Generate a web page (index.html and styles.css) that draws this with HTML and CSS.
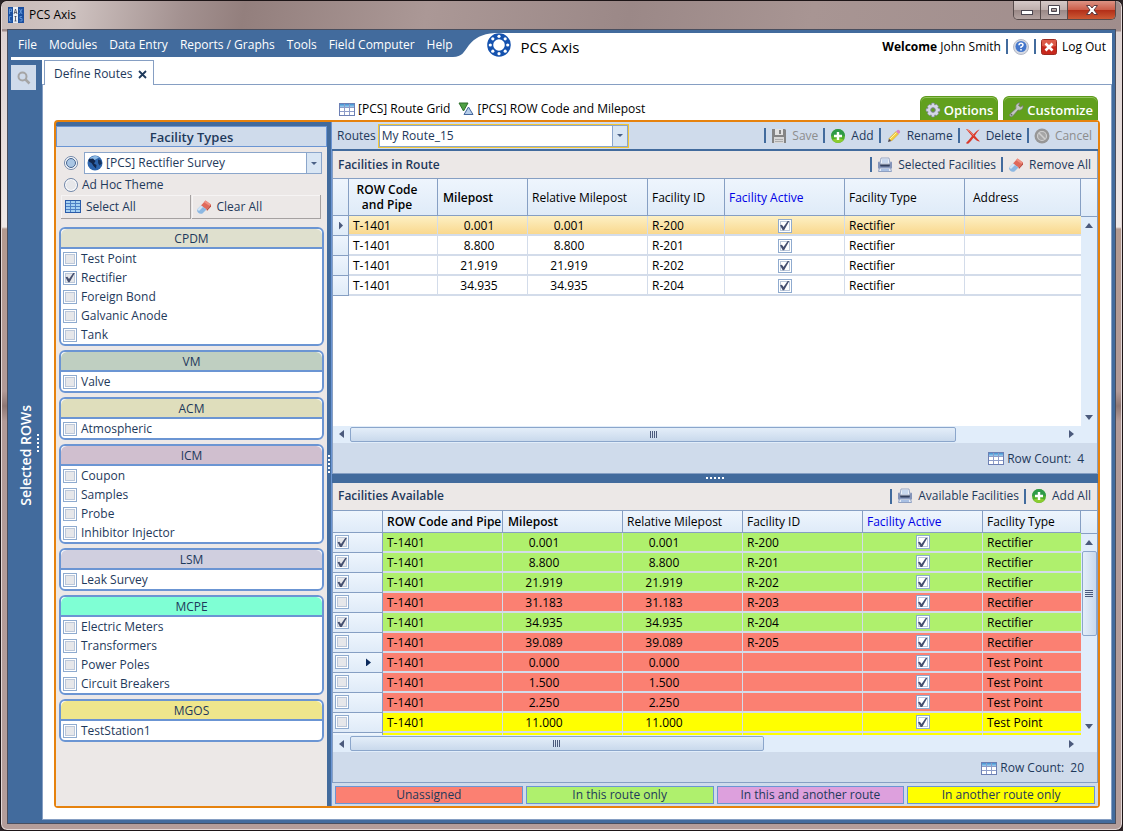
FILE: index.html
```html
<!DOCTYPE html>
<html lang="en">
<head>
    <meta charset="UTF-8">
    <meta name="viewport" content="width=device-width, initial-scale=1.0">
    <title>PCS Axis</title>
    <link rel="stylesheet" href="styles.css">
</head>
<body>
    <!-- shared icons -->
    <svg class="sprite" aria-hidden="true">
        <linearGradient id="gridHead" x1="0" y1="0" x2="0" y2="1">
            <stop offset="0" stop-color="#3f8fd0"/><stop offset="1" stop-color="#9fd0f0"/>
        </linearGradient>
        <symbol id="i-grid" viewBox="0 0 16 13">
            <rect x="0.5" y="0.5" width="15" height="12" fill="#fff" stroke="#6d80b4"/>
            <rect x="1" y="1" width="14" height="3" fill="url(#gridHead)"/>
            <path d="M1 4.5H15M1 8.5H15M5.5 1V12M10.5 1V12" stroke="#8d9cc8" fill="none"/>
        </symbol>
        <symbol id="i-gridblue" viewBox="0 0 16 13">
            <rect x="0.5" y="0.5" width="15" height="12" fill="#a5d0f2" stroke="#2a5ba8"/>
            <path d="M1 3.5H15M1 6.5H15M1 9.5H15M5.5 1V12M10.5 1V12" stroke="#4d80c6" fill="none"/>
        </symbol>
        <symbol id="i-eraser" viewBox="0 0 16 16">
            <path d="M9.500 1.500L15 5.500L10.500 10.500L5 6.500Z" fill="#e0695a"/>
            <path d="M9.500 1.500L15 5.500L13.800 7L8 3.200Z" fill="#ee9184"/>
            <path d="M5 6.500L10.500 10.500L6.500 14.500Q4 15.500 2 13.500Q0.500 12 1.500 10Z" fill="#8db8e2"/>
            <path d="M5 6.500L7 8L3 12L1.300 10.500Z" fill="#d3e6f7"/>
            <path d="M10.500 10.500L15 5.500V7.500L11 12Z" fill="#c04b3e"/>
        </symbol>
        <symbol id="i-printer" viewBox="0 0 16 16">
            <path d="M4 1H12L13 7H3Z" fill="#eef3fa" stroke="#9aa8c4"/>
            <path d="M5 2H11V6H5Z" fill="#c8d8ee"/>
            <path d="M1 5.500Q1 4.500 2.500 4.500L3.500 8H12.500L13.500 4.500Q15 4.500 15 5.500V11.500H1Z" fill="#8393b8"/>
            <path d="M3 7.500H13L12.500 9.500H3.500Z" fill="#33415f"/>
            <path d="M2.500 11H13.500L14.500 14.500H1.500Z" fill="#e4ecf7" stroke="#8fa0c2"/>
            <path d="M4 13H12" stroke="#6f94d0"/>
        </symbol>
        <symbol id="i-add" viewBox="0 0 16 16">
            <circle cx="8" cy="8" r="7" fill="#4fae2c"/>
            <path d="M1 8A7 7 0 0 1 15 8Q8 6 1 8Z" fill="#2f9a48"/>
            <path d="M2.200 11.800A7 7 0 0 0 13.800 11.800Q8 9 2.200 11.800Z" fill="#8ccc2f"/>
            <path d="M8 4V12M4 8H12" stroke="#fff" stroke-width="2.400"/>
        </symbol>
        <symbol id="i-save" viewBox="0 0 16 16">
            <path d="M1 1H14L15 2V15H1Z" fill="#858585"/>
            <rect x="4" y="1" width="8" height="6" fill="#e2e2e2"/>
            <rect x="8" y="2" width="2" height="4" fill="#858585"/>
            <rect x="3" y="9" width="10" height="6" fill="#d8d8d8"/>
            <path d="M4 11.500H12M4 13.500H12" stroke="#aaa"/>
        </symbol>
        <symbol id="i-pencil" viewBox="0 0 16 16">
            <path d="M2 14L3 10.500L5.500 13Z" fill="#4a4048"/>
            <path d="M3 10.500L10 3.500L12.500 6L5.500 13Z" fill="#f5cf3e" stroke="#c99a23" stroke-width="0.500"/>
            <path d="M4 11L10.500 4.500" stroke="#fff3a8"/>
            <path d="M10 3.500L11.500 2Q12.500 1.500 13.500 2.500Q14.500 3.500 14 4.500L12.500 6Z" fill="#d884c4"/>
        </symbol>
        <symbol id="i-delete" viewBox="0 0 16 16">
            <path d="M1 1Q4 1 8.500 6.300Q12 2 14.500 1.500Q12 4 9.800 7.800Q12.500 11 15 13.500Q11.500 13.500 8.500 9.800Q5.500 14 3.500 15.500Q1.500 16 1 15Q4 12 7 8Q4 4.500 1 1Z" fill="#d93a2b"/>
            <path d="M2 1.500Q5 3 8.500 7.500" stroke="#f08a7c" fill="none"/>
        </symbol>
        <symbol id="i-cancel" viewBox="0 0 16 16">
            <circle cx="8" cy="8" r="7.500" fill="#969696"/>
            <circle cx="8" cy="8" r="4.500" fill="#a6a6a6" stroke="#cfcfcf" stroke-width="1.200"/>
            <path d="M5 5L11 11" stroke="#cfcfcf" stroke-width="1.500"/>
        </symbol>
        <symbol id="i-globe" viewBox="0 0 16 16">
            <circle cx="8" cy="8" r="7.500" fill="#2c64ac"/>
            <path d="M3 3Q8 -0.500 12 2.500Q9 5 4 5.500Z" fill="#8fbce6"/>
            <path d="M2 4L6 3.500L8.500 6L7 8.500L9.500 10L9 13.500L6.500 11L4.500 8Q2 7 1.500 5.500Z" fill="#13284e"/>
            <path d="M11 4.500L14 5.500L15 8.500L12.500 10.500L11 8Z" fill="#17335f"/>
        </symbol>
    </svg>

    <div class="window">
        <header class="titlebar">
            <svg class="app-icon" viewBox="0 0 16 16" aria-hidden="true">
                <rect width="16" height="16" fill="#1c4f9f"/>
                <rect x="5" width="5" height="16" fill="#e9eef5"/>
                <path d="M7.500 2L6 7M7.500 2L9 7M6.500 5.500H8.500M7.500 9V14M6.500 9.500H8.500M6.500 14H8.500" stroke="#445" stroke-width="0.800" fill="none"/>
                <path d="M1.500 7V2H3.500V4.500H1.500M3.500 9.500H1.500V14H3.500M11.500 2L14 7M14 2L11.500 7M14 9.500H12V11.500H14V14H11.500" stroke="#6fa4e6" stroke-width="0.800" fill="none"/>
            </svg>
            <span class="window-title">PCS Axis</span>
            <div class="window-buttons">
                <button class="win-btn" aria-label="Minimize"><svg width="14" height="12" viewBox="0 0 14 12"><rect x="1.500" y="6.500" width="11" height="4" fill="#fff" stroke="#4b4650"/></svg></button>
                <button class="win-btn" aria-label="Maximize"><svg width="14" height="12" viewBox="0 0 14 12"><path d="M1.500 1.500H12.500V10.500H1.500ZM4.500 4.500V7.500H9.500V4.500Z" fill="#fff" fill-rule="evenodd" stroke="#4b4650"/></svg></button>
                <button class="win-btn close" aria-label="Close"><svg width="14" height="12" viewBox="0 0 14 12"><path d="M1.500 1.500H5L7 4L9 1.500H12.500L9 6L12.500 10.500H9L7 8L5 10.500H1.500L5 6Z" fill="#fff" stroke="#5b3a40"/></svg></button>
            </div>
        </header>

        <div class="client">
            <div class="app-header">
                <nav class="menu">
                    <a href="#">File</a>
                    <a href="#">Modules</a>
                    <a href="#">Data Entry</a>
                    <a href="#">Reports / Graphs</a>
                    <a href="#">Tools</a>
                    <a href="#">Field Computer</a>
                    <a href="#">Help</a>
                </nav>
                <svg class="menu-curve" width="42" height="24" viewBox="0 0 42 24" aria-hidden="true"><path d="M0 0H42C28 1 22 5 16 12C11 19 9 24 0 24Z" fill="#426b9d"/></svg>
                <svg class="logo" width="24" height="24" viewBox="0 0 24 24" aria-hidden="true">
                    <circle cx="12" cy="12" r="8.800" fill="none" stroke="#1552ae" stroke-width="6"/>
                    <g fill="#fff">
                        <circle cx="12" cy="3.300" r="1.600"/><circle cx="18.200" cy="5.800" r="1.600"/>
                        <circle cx="20.700" cy="12" r="1.600"/><circle cx="18.200" cy="18.200" r="1.600"/>
                        <circle cx="12" cy="20.700" r="1.600"/><circle cx="5.800" cy="18.200" r="1.600"/>
                        <circle cx="3.300" cy="12" r="1.600"/><circle cx="5.800" cy="5.800" r="1.600"/>
                    </g>
                </svg>
                <span class="product">PCS Axis</span>
                <div class="account">
                    <span><b>Welcome</b> John Smith</span>
                    <i class="sep"></i>
                    <button class="tool" aria-label="Help">
                        <svg width="16" height="16" viewBox="0 0 16 16"><circle cx="8" cy="8" r="7.500" fill="#d5d9e2" stroke="#b4b9c6"/><circle cx="8" cy="7.500" r="5.500" fill="#4477cc"/><path d="M6 6.200Q6 4.200 8 4.200Q10 4.200 10 6Q10 7.200 8 8V9M8 10V11.500" stroke="#fff" stroke-width="1.500" fill="none"/></svg>
                    </button>
                    <i class="sep"></i>
                    <button class="tool">
                        <svg width="16" height="16" viewBox="0 0 16 16"><rect x="0.500" y="0.500" width="15" height="15" rx="2" fill="#c8281c" stroke="#9b2a20"/><path d="M1 1H15V7Q8 9 1 7Z" fill="#dc5a48"/><path d="M4.500 4.500L11.500 11.500M11.500 4.500L4.500 11.500" stroke="#fff" stroke-width="2.600"/></svg>
                        Log Out
                    </button>
                </div>
            </div>

            <div class="workspace">
                <aside class="sidebar">
                    <button class="search-btn" aria-label="Search">
                        <svg width="14" height="14" viewBox="0 0 14 14"><circle cx="5.500" cy="5.500" r="4" fill="none" stroke="#a5a5a5" stroke-width="2"/><path d="M8.500 8.500L12.500 12.500" stroke="#a5a5a5" stroke-width="2.500"/></svg>
                    </button>
                    <div class="sidebar-handle">
                        <span class="sidebar-label">Selected ROWs</span>
                        <i class="dots vertical"></i>
                    </div>
                </aside>

                <main class="main">
                    <div class="tabs">
                        <div class="tab">Define Routes
                            <button class="tab-close" aria-label="Close tab"><svg width="9" height="9" viewBox="0 0 9 9"><path d="M1 1L8 8M8 1L1 8" stroke="#1e395b" stroke-width="1.800"/></svg></button>
                        </div>
                    </div>

                    <div class="page">
                        <div class="page-toolbar">
                            <button class="tool"><svg width="16" height="13"><use href="#i-grid"/></svg>[PCS] Route Grid</button>
                            <button class="tool filter">
                                <svg width="16" height="14" viewBox="0 0 16 14"><path d="M1 1H10L5.500 9Z" fill="#4fa044" stroke="#2e6f2b"/><path d="M10.500 5L15 12.500H6Z" fill="#b5cdea" stroke="#44679c"/></svg>
                                [PCS] ROW Code and Milepost
                            </button>
                            <div class="page-actions">
                                <button class="green-tab">
                                    <svg width="16" height="16" viewBox="0 0 16 16"><path d="M6.800 1H9.200L9.700 3L11.500 2.200L13.500 4.200L12.800 6L15 6.800V9.200L12.900 9.800L13.600 11.700L11.700 13.600L9.800 12.900L9.200 15H6.800L6.200 12.900L4.300 13.600L2.400 11.700L3.100 9.800L1 9.200V6.800L3.100 6.200L2.400 4.300L4.300 2.400L6.200 3.100Z" fill="#d5d7e6" stroke="#7d819c" stroke-width="0.600"/><circle cx="8" cy="8" r="2.300" fill="#63a01e" stroke="#7d819c"/></svg>
                                    Options
                                </button>
                                <button class="green-tab">
                                    <svg width="16" height="16" viewBox="0 0 16 16"><path d="M2 12L8 6.500Q7 3 9.500 1.500Q11 0.500 12 1L10.500 3.500L12.500 5L15 3.500Q15.500 6 13.500 7.500Q12 8.500 10 8L5 13.800Q3.500 15.500 2 14.200Q0.800 13 2 12Z" fill="#c3c7c3" stroke="#71776f" stroke-width="0.700"/><circle cx="3.500" cy="12.700" r="0.900" fill="#61675f"/></svg>
                                    Customize
                                </button>
                            </div>
                        </div>

                        <div class="route-box">
                            <section class="types">
                                <h2 class="types-title">Facility Types</h2>
                                <div class="types-body">
                                    <div class="theme-row">
                                        <input type="radio" name="theme" id="themeSurvey" aria-label="Survey theme" checked>
                                        <div class="combo">
                                            <svg class="combo-icon" width="16" height="16"><use href="#i-globe"/></svg>
                                            <select aria-label="Theme"><option>[PCS] Rectifier Survey</option></select>
                                            <span class="combo-arrow"></span>
                                        </div>
                                    </div>
                                    <div class="theme-row adhoc">
                                        <input type="radio" name="theme" id="themeAdhoc">
                                        <label for="themeAdhoc">Ad Hoc Theme</label>
                                    </div>
                                    <div class="select-buttons">
                                        <button><svg width="16" height="13"><use href="#i-gridblue"/></svg>Select All</button>
                                        <button><svg width="16" height="16"><use href="#i-eraser"/></svg>Clear All</button>
                                    </div>

                                    <fieldset class="group cpdm">
                                        <h3>CPDM</h3>
                                        <label><input type="checkbox">Test Point</label>
                                        <label><input type="checkbox" checked>Rectifier</label>
                                        <label><input type="checkbox">Foreign Bond</label>
                                        <label><input type="checkbox">Galvanic Anode</label>
                                        <label><input type="checkbox">Tank</label>
                                    </fieldset>
                                    <fieldset class="group vm">
                                        <h3>VM</h3>
                                        <label><input type="checkbox">Valve</label>
                                    </fieldset>
                                    <fieldset class="group acm">
                                        <h3>ACM</h3>
                                        <label><input type="checkbox">Atmospheric</label>
                                    </fieldset>
                                    <fieldset class="group icm">
                                        <h3>ICM</h3>
                                        <label><input type="checkbox">Coupon</label>
                                        <label><input type="checkbox">Samples</label>
                                        <label><input type="checkbox">Probe</label>
                                        <label><input type="checkbox">Inhibitor Injector</label>
                                    </fieldset>
                                    <fieldset class="group lsm">
                                        <h3>LSM</h3>
                                        <label><input type="checkbox">Leak Survey</label>
                                    </fieldset>
                                    <fieldset class="group mcpe">
                                        <h3>MCPE</h3>
                                        <label><input type="checkbox">Electric Meters</label>
                                        <label><input type="checkbox">Transformers</label>
                                        <label><input type="checkbox">Power Poles</label>
                                        <label><input type="checkbox">Circuit Breakers</label>
                                    </fieldset>
                                    <fieldset class="group mgos">
                                        <h3>MGOS</h3>
                                        <label><input type="checkbox">TestStation1</label>
                                    </fieldset>
                                </div>
                            </section>

                            <div class="splitter-v"><i class="dots vertical"></i></div>

                            <section class="routes">
                                <div class="routes-bar">
                                    <label for="route">Routes</label>
                                    <div class="combo focused">
                                        <select id="route"><option>My Route_15</option></select>
                                        <span class="combo-arrow"></span>
                                    </div>
                                    <div class="tools">
                                        <i class="sep"></i>
                                        <button class="tool" disabled><svg width="16" height="16"><use href="#i-save"/></svg>Save</button>
                                        <i class="sep"></i>
                                        <button class="tool"><svg width="16" height="16"><use href="#i-add"/></svg>Add</button>
                                        <i class="sep"></i>
                                        <button class="tool"><svg width="16" height="16"><use href="#i-pencil"/></svg>Rename</button>
                                        <i class="sep"></i>
                                        <button class="tool"><svg width="16" height="16"><use href="#i-delete"/></svg>Delete</button>
                                        <i class="sep"></i>
                                        <button class="tool" disabled><svg width="16" height="16"><use href="#i-cancel"/></svg>Cancel</button>
                                    </div>
                                </div>

                                <div class="pane pane-route">
                                    <div class="pane-bar">
                                        <h2>Facilities in Route</h2>
                                        <div class="tools">
                                            <i class="sep"></i>
                                            <button class="tool"><svg width="16" height="16"><use href="#i-printer"/></svg>Selected Facilities</button>
                                            <i class="sep"></i>
                                            <button class="tool"><svg width="16" height="16"><use href="#i-eraser"/></svg>Remove All</button>
                                        </div>
                                    </div>
                                    <div class="grid">
                                        <div class="grid-view">
                                            <table class="grid-table tall">
                                                <colgroup><col class="w16"><col class="w89"><col class="w90"><col class="w120"><col class="w77"><col class="w120"><col class="w120"><col></colgroup>
                                                <thead>
                                                    <tr><th></th><th class="key wrap">ROW Code and Pipe</th><th class="key">Milepost</th><th>Relative Milepost</th><th>Facility ID</th><th class="active">Facility Active</th><th>Facility Type</th><th class="address">Address</th></tr>
                                                </thead>
                                                <tbody id="routeRows"></tbody>
                                            </table>
                                        </div>
                                        <div class="vscroll tall">
                                            <button class="arrow up" aria-label="Scroll up"></button>
                                            <div class="track"></div>
                                            <button class="arrow down" aria-label="Scroll down"></button>
                                        </div>
                                    </div>
                                    <div class="hscroll">
                                        <button class="arrow left" aria-label="Scroll left"></button>
                                        <div class="track"><div class="thumb wide"></div></div>
                                        <button class="arrow right" aria-label="Scroll right"></button>
                                    </div>
                                    <div class="row-count"><svg width="16" height="13"><use href="#i-grid"/></svg>Row Count:<span>4</span></div>
                                </div>

                                <div class="splitter-h"><i class="dots"></i></div>

                                <div class="pane pane-available">
                                    <div class="pane-bar">
                                        <h2>Facilities Available</h2>
                                        <div class="tools">
                                            <i class="sep"></i>
                                            <button class="tool"><svg width="16" height="16"><use href="#i-printer"/></svg>Available Facilities</button>
                                            <i class="sep"></i>
                                            <button class="tool"><svg width="16" height="16"><use href="#i-add"/></svg>Add All</button>
                                        </div>
                                    </div>
                                    <div class="grid">
                                        <div class="grid-view">
                                            <table class="grid-table">
                                                <colgroup><col class="w50"><col class="w120"><col class="w120"><col class="w120"><col class="w120"><col class="w120"><col></colgroup>
                                                <thead>
                                                    <tr><th></th><th class="key first">ROW Code and Pipe</th><th class="key">Milepost</th><th>Relative Milepost</th><th>Facility ID</th><th class="active">Facility Active</th><th>Facility Type</th></tr>
                                                </thead>
                                                <tbody id="availableRows"></tbody>
                                            </table>
                                        </div>
                                        <div class="vscroll">
                                            <button class="arrow up" aria-label="Scroll up"></button>
                                            <div class="track"><div class="thumb"></div></div>
                                            <button class="arrow down" aria-label="Scroll down"></button>
                                        </div>
                                    </div>
                                    <div class="hscroll">
                                        <button class="arrow left" aria-label="Scroll left"></button>
                                        <div class="track"><div class="thumb narrow"></div></div>
                                        <button class="arrow right" aria-label="Scroll right"></button>
                                    </div>
                                    <div class="row-count"><svg width="16" height="13"><use href="#i-grid"/></svg>Row Count:<span>20</span></div>
                                </div>

                                <div class="legend">
                                    <div class="unassigned">Unassigned</div>
                                    <div class="this-route">In this route only</div>
                                    <div class="both">In this and another route</div>
                                    <div class="other">In another route only</div>
                                </div>
                            </section>
                        </div>
                    </div>
                </main>
            </div>
        </div>
    </div>

    <script>
        const routeRows = [
            ['0.001', 'R-200'],
            ['8.800', 'R-201'],
            ['21.919', 'R-202'],
            ['34.935', 'R-204']
        ];

        const availableRows = [
            ['this-route', '0.001', 'R-200', 'Rectifier'],
            ['this-route', '8.800', 'R-201', 'Rectifier'],
            ['this-route', '21.919', 'R-202', 'Rectifier'],
            ['unassigned', '31.183', 'R-203', 'Rectifier'],
            ['this-route', '34.935', 'R-204', 'Rectifier'],
            ['unassigned', '39.089', 'R-205', 'Rectifier'],
            ['unassigned', '0.000', '', 'Test Point'],
            ['unassigned', '1.500', '', 'Test Point'],
            ['unassigned', '2.250', '', 'Test Point'],
            ['other', '11.000', '', 'Test Point'],
            ['other', '', '', '']
        ];

        const activeBox = '<input type="checkbox" aria-label="Facility active" checked>';

        document.getElementById('routeRows').innerHTML = routeRows.map(([milepost, id], i) => `
            <tr class="${i === 0 ? 'current' : ''}">
                <td class="marker">${i === 0 ? '<i class="pointer"></i>' : ''}</td>
                <td>T-1401</td><td class="num narrow">${milepost}</td><td class="num">${milepost}</td><td>${id}</td>
                <td class="check">${activeBox}</td><td>Rectifier</td><td></td>
            </tr>`).join('');

        document.getElementById('availableRows').innerHTML = availableRows.map(([status, milepost, id, type], i) => {
            const filled = milepost !== '';
            const picked = status === 'this-route' ? 'checked' : '';
            const box = filled ? `<input type="checkbox" aria-label="Select row" ${picked}>` : '';
            return `
            <tr class="${status}">
                <td class="marker"><div class="marker-cell">${box}${i === 6 ? '<i class="pointer dark"></i>' : ''}</div></td>
                <td>${filled ? 'T-1401' : ''}</td><td class="num">${milepost}</td><td class="num">${milepost}</td><td>${id}</td>
                <td class="check">${filled ? activeBox : ''}</td><td>${type}</td>
            </tr>`;
        }).join('');
    </script>
</body>
</html>
```
FILE: styles.css
```css
* {
    box-sizing: border-box;
}
body {
    margin: 0;
    height: 100vh;
    overflow: hidden;
    background: #2b2326;
    font-family: "Open Sans", "Segoe UI", sans-serif;
    font-size: 12px;
    line-height: 16px;
    color: #1e395b;
}
button, select, input {
    font: inherit;
    color: inherit;
    margin: 0;
}
button {
    padding: 0;
    border: none;
    background: none;
}
h2, h3 {
    margin: 0;
    font-size: 12px;
    font-weight: normal;
}
svg {
    display: block;
    flex: none;
}
.sprite {
    position: absolute;
    width: 0;
    height: 0;
}

/* window frame */
.window {
    display: flex;
    flex-direction: column;
    height: 100vh;
    padding: 0 6px 6px;
    border: 1px solid #1d1517;
    border-radius: 7px;
    box-shadow: inset 0 0 0 1px #e3d8d7;
    background: linear-gradient(to bottom, #b09d9b 0, #a08d8c 30px, #ddd2d1 31px, #efe8e7 226px, #b3998f 228px, #b29a97 390px, #8e7774 405px, #b29a97 420px, #b39d9a 100%);
}
.titlebar {
    display: flex;
    align-items: center;
    height: 28px;
    flex: none;
    margin: 0 -5px;
    padding-left: 6px;
    border-radius: 6px 6px 0 0;
    background: linear-gradient(100deg, #c9bcba 0, #cfc3c1 70px, #a39190 180px, #937f7d 240px, #ab9896 420px, #9b8887 620px, #a89593 800px, #a08d8c 100%);
    color: #000;
}
.app-icon {
    width: 16px;
    height: 16px;
}
.window-title {
    margin-left: 5px;
}
.window-buttons {
    display: flex;
    align-self: flex-start;
    margin: 0 5px 0 auto;
    border: 1px solid #574b4b;
    border-top: none;
    border-radius: 0 0 5px 5px;
    overflow: hidden;
}
.win-btn {
    display: flex;
    align-items: center;
    justify-content: center;
    width: 27px;
    height: 18px;
    border-right: 1px solid #574b4b;
    background: linear-gradient(#d5c9c8 0, #bfb0ae 48%, #9a8886 50%, #b3a3a1 100%);
}
.win-btn.close {
    width: 47px;
    border: none;
    background: linear-gradient(#dd9384 0, #cc5e4a 48%, #b22d17 50%, #cc5a35 100%);
}
.client {
    display: flex;
    flex-direction: column;
    flex: 1;
    min-height: 0;
    padding: 3px 3px 3px 0;
    border: 1px solid #494e5e;
    background: #426b9d;
}

/* header and menu */
.app-header {
    display: flex;
    align-items: flex-start;
    height: 27px;
    flex: none;
    margin-left: 3px;
    background: #fff;
    color: #000;
}
.menu {
    display: flex;
    align-items: center;
    gap: 12px;
    height: 24px;
    margin-left: -3px;
    padding-left: 10px;
    background: #426b9d;
}
.menu a {
    color: #fff;
    text-decoration: none;
    white-space: nowrap;
}
.logo {
    margin-left: -8px;
}
.product {
    margin-left: 10px;
    font-size: 15px;
    line-height: 28px;
}
.account {
    display: flex;
    align-items: center;
    gap: 5px;
    height: 27px;
    margin-left: auto;
    padding-right: 6px;
    white-space: nowrap;
}
.sep {
    width: 2px;
    height: 15px;
    flex: none;
    background: #426b9d;
}
.tool {
    display: flex;
    align-items: center;
    gap: 5px;
    white-space: nowrap;
}
.tool:disabled {
    color: #8d8d8d;
}

/* left strip */
.workspace {
    display: flex;
    flex: 1;
    min-height: 0;
}
.sidebar {
    display: flex;
    flex-direction: column;
    width: 34px;
    flex: none;
    padding: 5px 3px;
    color: #fff;
}
.search-btn {
    display: flex;
    align-items: center;
    justify-content: center;
    width: 25px;
    height: 25px;
    background: #cfdbeb;
}
.sidebar-handle {
    display: flex;
    align-items: center;
    justify-content: flex-end;
    flex: 1;
    gap: 3px;
    padding-bottom: 20px;
}
.sidebar-label {
    margin-top: 26px;
    writing-mode: vertical-rl;
    transform: rotate(180deg);
    font-size: 14px;
    font-weight: 600;
}
.dots {
    width: 18px;
    height: 2px;
    background: repeating-linear-gradient(to right, #fff 0, #fff 2px, transparent 2px, transparent 4px);
}
.dots.vertical {
    width: 2px;
    height: 18px;
    background: repeating-linear-gradient(to bottom, #fff 0, #fff 2px, transparent 2px, transparent 4px);
}

/* tab strip */
.main {
    display: flex;
    flex-direction: column;
    flex: 1;
    min-width: 0;
    background: #fff;
}
.tabs {
    display: flex;
    height: 25px;
    flex: none;
    padding-left: 2px;
    border-bottom: 1px solid #869fc3;
}
.tab {
    display: flex;
    align-items: center;
    gap: 6px;
    height: 25px;
    padding: 2px 6px 0 9px;
    border: 1px solid #869fc3;
    border-bottom: none;
    background: #fff;
}
.page {
    display: flex;
    flex-direction: column;
    flex: 1;
    min-height: 0;
    padding: 11px 11px 11px;
    border: 1px solid #869fc3;
    border-top: none;
}
.page-toolbar {
    display: flex;
    align-items: center;
    height: 24px;
    flex: none;
    padding: 0 2px 0 285px;
    color: #000;
}
.page-toolbar .tool {
    gap: 3px;
    padding-top: 2px;
}
.page-toolbar .filter {
    margin-left: 8px;
}
.page-actions {
    display: flex;
    gap: 5px;
    margin-left: auto;
}
.green-tab {
    display: flex;
    align-items: center;
    gap: 3px;
    height: 24px;
    padding: 2px 4px 0;
    border: 1px solid #5d9a1c;
    border-bottom: none;
    border-radius: 6px 6px 0 0;
    box-shadow: inset 0 1px 0 #93c45c;
    background: #61a01d;
    color: #fff;
    font-size: 13px;
    font-weight: 600;
}
.route-box {
    display: flex;
    flex: 1;
    min-height: 0;
    border: 2px solid #e6820e;
    border-radius: 4px;
    background: #426b9d;
}

/* facility types */
.types {
    display: flex;
    flex-direction: column;
    width: 271px;
    flex: none;
    margin-top: 4px;
    background: #ece8e7;
}
.types-title {
    height: 21px;
    flex: none;
    border: 1px solid #6b95d3;
    background: #cfdbeb;
    font-size: 13px;
    font-weight: 600;
    line-height: 20px;
    text-align: center;
}
.types-body {
    display: flex;
    flex-direction: column;
    padding: 5px 3px 0;
}
.theme-row {
    display: flex;
    align-items: center;
    gap: 6px;
    height: 22px;
    padding: 0 2px 0 5px;
}
.theme-row.adhoc {
    gap: 4px;
    height: 21px;
}
.combo {
    display: flex;
    align-items: center;
    flex: 1;
    height: 22px;
    border: 1px solid #8ba6cb;
    background: #fff;
}
.combo-icon {
    margin-left: 2px;
}
.combo select {
    flex: 1;
    min-width: 0;
    height: 18px;
    padding: 0 3px;
    border: none;
    background: none;
    appearance: none;
    outline: none;
}
.combo-arrow {
    display: flex;
    align-items: center;
    justify-content: center;
    align-self: stretch;
    width: 15px;
    border-left: 1px solid #8ba6cb;
    background: #d9e6f4;
    pointer-events: none;
}
.combo-arrow::before {
    content: "";
    border: 3px solid transparent;
    border-top-color: #4b6186;
    border-bottom: none;
}
.select-buttons {
    display: flex;
    gap: 1px;
    margin-bottom: 8px;
    padding: 0 3px 0 2px;
}
.select-buttons button {
    display: flex;
    align-items: center;
    gap: 5px;
    flex: 1;
    height: 24px;
    padding-left: 4px;
    border-right: 1px solid #a5a1a1;
    border-bottom: 1px solid #a5a1a1;
    box-shadow: inset 1px 1px 0 #f6f4f4;
}
.group {
    display: flex;
    flex-direction: column;
    min-width: 0;
    margin: 0 0 4px;
    padding: 0;
    border: 2px solid #6b95d3;
    border-radius: 6px;
    background: #fff;
    overflow: hidden;
}
.group h3 {
    height: 20px;
    border-bottom: 2px solid #6b95d3;
    line-height: 19px;
    text-align: center;
}
.group label {
    display: flex;
    align-items: center;
    gap: 4px;
    height: 19px;
    padding-left: 2px;
    line-height: 18px;
}
.cpdm h3 { background: #dfe0ce; }
.vm h3 { background: #bfcfc1; }
.acm h3 { background: #dfdebc; }
.icm h3 { background: #d0bfcf; }
.lsm h3 { background: #d0cfdf; }
.mcpe h3 { background: #7fffd4; }
.mgos h3 { background: #efe68c; }

/* check boxes and radios */
input[type="checkbox"], input[type="radio"] {
    appearance: none;
    display: flex;
    align-items: center;
    justify-content: center;
    width: 14px;
    height: 14px;
    flex: none;
    border: 1px solid #8fabcf;
    background: #e6e7ea;
    box-shadow: inset 0 0 0 1px #fff, inset 0 0 0 2px #bcc8da;
}
input[type="checkbox"]:checked::before {
    content: "";
    width: 10px;
    height: 10px;
    background: #465070;
    clip-path: polygon(5% 48%, 24% 42%, 40% 66%, 82% 5%, 98% 5%, 46% 98%, 32% 98%);
}
input[type="radio"] {
    border-color: #7086a8;
    border-radius: 50%;
    box-shadow: inset 0 0 0 1px #fff;
}
input[type="radio"]:checked {
    background: #fff;
}
input[type="radio"]:checked::before {
    content: "";
    width: 8px;
    height: 8px;
    border: 1px solid #46648f;
    border-radius: 50%;
    background: #a9c6e4;
}

/* splitters */
.splitter-v {
    display: flex;
    align-items: center;
    justify-content: center;
    width: 4px;
    flex: none;
}
.splitter-h {
    display: flex;
    align-items: center;
    justify-content: center;
    height: 9px;
    flex: none;
}

/* right side */
.routes {
    display: flex;
    flex-direction: column;
    flex: 1;
    min-width: 0;
    border-left: 1px solid #6b95d3;
}
.routes-bar {
    display: flex;
    align-items: center;
    height: 29px;
    flex: none;
    padding: 0 6px 0 5px;
    border-bottom: 2px solid #426b9d;
    background: #cfdbeb;
}
.routes-bar .combo {
    flex: 0 1 249px;
    margin-left: 3px;
}
.routes-bar .combo select {
    padding-left: 2px;
}
.combo.focused {
    outline: 1px solid #f2c634;
}
.tools {
    display: flex;
    align-items: center;
    gap: 5px;
    margin-left: auto;
}
.pane {
    display: flex;
    flex-direction: column;
    min-height: 0;
    border: 1px solid #869fc3;
    border-top: none;
    background: #cfdbeb;
}
.pane-route {
    flex: 323 1 0;
}
.pane-available {
    flex: 300 1 0;
}
.pane-bar {
    display: flex;
    align-items: center;
    height: 28px;
    flex: none;
    padding: 0 6px 0 5px;
    border-bottom: 1px solid #869fc3;
    background: #ece8e7;
}
.pane-bar h2 {
    font-weight: 600;
}

/* data grids */
.grid {
    display: flex;
    flex: 1;
    min-height: 0;
    background: #fff;
}
.grid-view {
    flex: 1;
    min-width: 0;
    overflow: hidden;
}
.grid-table {
    width: 100%;
    table-layout: fixed;
    border-collapse: separate;
    border-spacing: 0;
    color: #000;
}
.w16 { width: 16px; }
.w50 { width: 50px; }
.w77 { width: 77px; }
.w89 { width: 89px; }
.w90 { width: 90px; }
.w120 { width: 120px; }
.grid-table th {
    height: 22px;
    padding: 0 4px;
    border-right: 1px solid #869fc3;
    border-bottom: 1px solid #869fc3;
    background: linear-gradient(#eef5fd, #dfebf8);
    font-weight: normal;
    line-height: 15px;
    text-align: left;
    white-space: nowrap;
}
.tall th {
    height: 37px;
}
.grid-table th.key {
    font-weight: 600;
    padding-left: 5px;
}
.grid-table th.first {
    padding: 0 4px;
}
.grid-table th.wrap {
    padding: 0 16px 0 4px;
    text-align: center;
    white-space: normal;
}
.grid-table th.active {
    color: #0000e6;
}
.grid-table th.address {
    padding-left: 8px;
}
.grid-table td {
    height: 20px;
    padding: 2px 4px 0;
    border-right: 1px solid #d3dcea;
    border-bottom: 2px solid #d3dcea;
    background: #fff;
    line-height: 16px;
    white-space: nowrap;
}
.grid-table td:last-child {
    border-right: none;
}
.grid-table td.num {
    padding-right: 41px;
    text-align: center;
}
.grid-table td.narrow {
    padding-right: 11px;
}
.grid-table td.check {
    padding-top: 1px;
}
.grid-table td.check input {
    margin: 0 auto;
    background: #fff;
}
.grid-table td.marker {
    padding: 0 2px;
    border-right: 1px solid #869fc3;
    border-bottom: 1px solid #869fc3;
    background: linear-gradient(#eef5fd, #dfebf8);
}
.marker-cell {
    display: flex;
    align-items: center;
    gap: 17px;
}
.pointer {
    display: block;
    width: 4px;
    height: 8px;
    margin-left: 4px;
    background: #4b5a7c;
    clip-path: polygon(0 0, 100% 50%, 0 100%);
}
.pointer.dark {
    margin: 0;
    width: 5px;
    background: #0b2a5c;
}
.current td {
    background: linear-gradient(#fdf0c4, #f9d88e);
}
.grid-table .this-route td:not(.marker), .legend .this-route { background: #aff06d; }
.grid-table .unassigned td:not(.marker), .legend .unassigned { background: #fb8072; }
.grid-table .other td:not(.marker), .legend .other { background: #ffff00; }
.legend .both { background: #dda0dd; }

/* scroll bars */
.vscroll {
    display: flex;
    flex-direction: column;
    align-items: center;
    width: 16px;
    flex: none;
    background: #e1edfa;
}
.vscroll::before {
    content: "";
    align-self: stretch;
    height: 22px;
    flex: none;
    border-bottom: 1px solid #869fc3;
    background: linear-gradient(#eef5fd, #dfebf8);
}
.vscroll.tall::before {
    height: 37px;
}
.track {
    flex: 1;
    min-width: 0;
}
.arrow {
    display: flex;
    align-items: center;
    justify-content: center;
    width: 17px;
    height: 17px;
    flex: none;
}
.vscroll .arrow {
    width: 16px;
}
.arrow::before {
    content: "";
    border: 4px solid transparent;
}
.arrow.up::before { border-bottom: 5px solid #4b5a7c; border-top: none; }
.arrow.down::before { border-top: 5px solid #4b5a7c; border-bottom: none; }
.arrow.left::before { border-right: 5px solid #4b5a7c; border-left: none; }
.arrow.right::before { border-left: 5px solid #4b5a7c; border-right: none; }
.hscroll {
    display: flex;
    height: 17px;
    flex: none;
    padding-right: 17px;
    background: #e1edfa;
}
.thumb {
    display: flex;
    align-items: center;
    justify-content: center;
    width: 15px;
    height: 85px;
    border: 1px solid #8ba6cb;
    border-radius: 2px;
    background: linear-gradient(to right, #e4eef9, #c9d9ec);
}
.thumb::before {
    content: "";
    width: 8px;
    height: 7px;
    background: repeating-linear-gradient(#4b5a7c 0, #4b5a7c 1px, transparent 1px, transparent 2px);
}
.hscroll .thumb {
    height: 15px;
    margin: 1px 0;
    background: linear-gradient(#e4eef9, #c9d9ec);
}
.hscroll .thumb::before {
    width: 7px;
    height: 7px;
    background: repeating-linear-gradient(to right, #4b5a7c 0, #4b5a7c 1px, transparent 1px, transparent 2px);
}
.hscroll .wide { width: 85%; }
.hscroll .narrow { width: 58%; }
.row-count {
    display: flex;
    align-items: center;
    justify-content: flex-end;
    gap: 3px;
    height: 30px;
    flex: none;
    padding: 2px 13px 0 0;
}
.row-count span {
    margin-left: 3px;
}

/* legend */
.legend {
    display: grid;
    grid-template-columns: repeat(4, 1fr);
    gap: 3px;
    flex: none;
    padding: 3px 3px 2px;
    background: #cfdbeb;
    text-align: center;
}
.legend div {
    border: 1px solid #6b95d3;
}
```
